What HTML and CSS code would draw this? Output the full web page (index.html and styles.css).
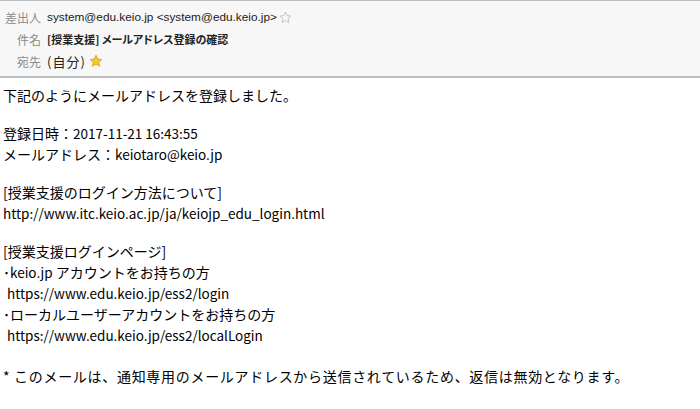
FILE: index.html
```html
<!DOCTYPE html>
<html lang="ja">
<head>
    <meta charset="UTF-8">
    <meta name="viewport" content="width=device-width, initial-scale=1.0">
    <title>[授業支援] メールアドレス登録の確認</title>
    <link rel="stylesheet" href="styles.css">
</head>
<body>
    <!-- Message header -->
    <div class="header">
        <div class="row">
            <span class="label">差出人</span>
            <span class="value">system@edu.keio.jp &lt;system@edu.keio.jp&gt;</span>
            <svg class="star" width="13" height="13" viewBox="0 0 24 24">
                <path d="M12 2l3 6.6 7.1.8-5.3 4.8 1.5 7L12 17.6 5.7 21.2l1.5-7L1.9 9.4 9 8.6z" fill="none" stroke="#b8bcc2" stroke-width="1.6" stroke-linejoin="round"/>
            </svg>
        </div>
        <div class="row">
            <span class="label">件名</span>
            <span class="value subject">[授業支援] メールアドレス登録の確認</span>
        </div>
        <div class="row">
            <span class="label">宛先</span>
            <span class="value me">(自分)</span>
            <svg class="star gold" width="14" height="14" viewBox="0 0 24 24">
                <path d="M12 2l3 6.6 7.1.8-5.3 4.8 1.5 7L12 17.6 5.7 21.2l1.5-7L1.9 9.4 9 8.6z" fill="#f8c630" stroke="#d9a01a" stroke-width="1.4" stroke-linejoin="round"/>
            </svg>
        </div>
    </div>

    <!-- Message body -->
    <div class="message">
        <div class="line">下記のようにメールアドレスを登録しました。</div>
        <div class="blank"></div>
        <div class="line">登録日時：<span class="en">2017-11-21 16:43:55</span></div>
        <div class="line">メールアドレス：<span class="en">keiotaro@keio.jp</span></div>
        <div class="blank"></div>
        <div class="line">[授業支援のログイン方法について]</div>
        <div class="line en">http://www.itc.keio.ac.jp/ja/keiojp_edu_login.html</div>
        <div class="blank"></div>
        <div class="line">[授業支援ログインページ]</div>
        <div class="line">･<span class="en">keio.jp</span> アカウントをお持ちの方</div>
        <div class="line en indent">https://www.edu.keio.jp/ess2/login</div>
        <div class="line">･ローカルユーザーアカウントをお持ちの方</div>
        <div class="line en indent">https://www.edu.keio.jp/ess2/localLogin</div>
        <div class="blank last"></div>
        <div class="line note">* このメールは、通知専用のメールアドレスから送信されているため、返信は無効となります。</div>
    </div>
</body>
</html>
```

FILE: styles.css
```css
body {
    margin: 0;
    background-color: #ffffff;
    font-family: "Noto Sans CJK JP", sans-serif;
    color: #000;
}
.header {
    background: #f7f7f7;
    border-top: 1px solid #bdbdbd;
    border-bottom: 2px solid #b9bcc1;
    padding: 5px 0 4px 0;
    font-family: "Liberation Sans", "Noto Sans CJK JP", sans-serif;
    font-size: 11.8px;
}
.header .row {
    display: flex;
    align-items: center;
    height: 22px;
}
.header .label {
    width: 41px;
    text-align: right;
    color: #8a8a8a;
    font-family: "Noto Sans CJK JP", sans-serif;
    font-size: 12px;
    margin-right: 6px;
}
.header .value {
    color: #222;
}
.header .subject {
    font-weight: bold;
    font-family: "Noto Sans CJK JP", sans-serif;
    font-size: 11px;
    font-feature-settings: "palt";
}
.header .me {
    font-family: "Noto Sans CJK JP", sans-serif;
    font-size: 13px;
    letter-spacing: 1px;
}
.header .star {
    margin-left: 2px;
}
.header .star.gold {
    margin-left: 3px;
}
.message {
    padding: 7px 0 0 3px;
    font-size: 14px;
    line-height: 21px;
}
.message .en {
    font-size: 13.5px;
}
.message .blank {
    height: 17px;
}
.message .blank.last {
    height: 20px;
}
.message .indent {
    padding-left: 4px;
}
.message .note {
    letter-spacing: 0.7px;
}
```
